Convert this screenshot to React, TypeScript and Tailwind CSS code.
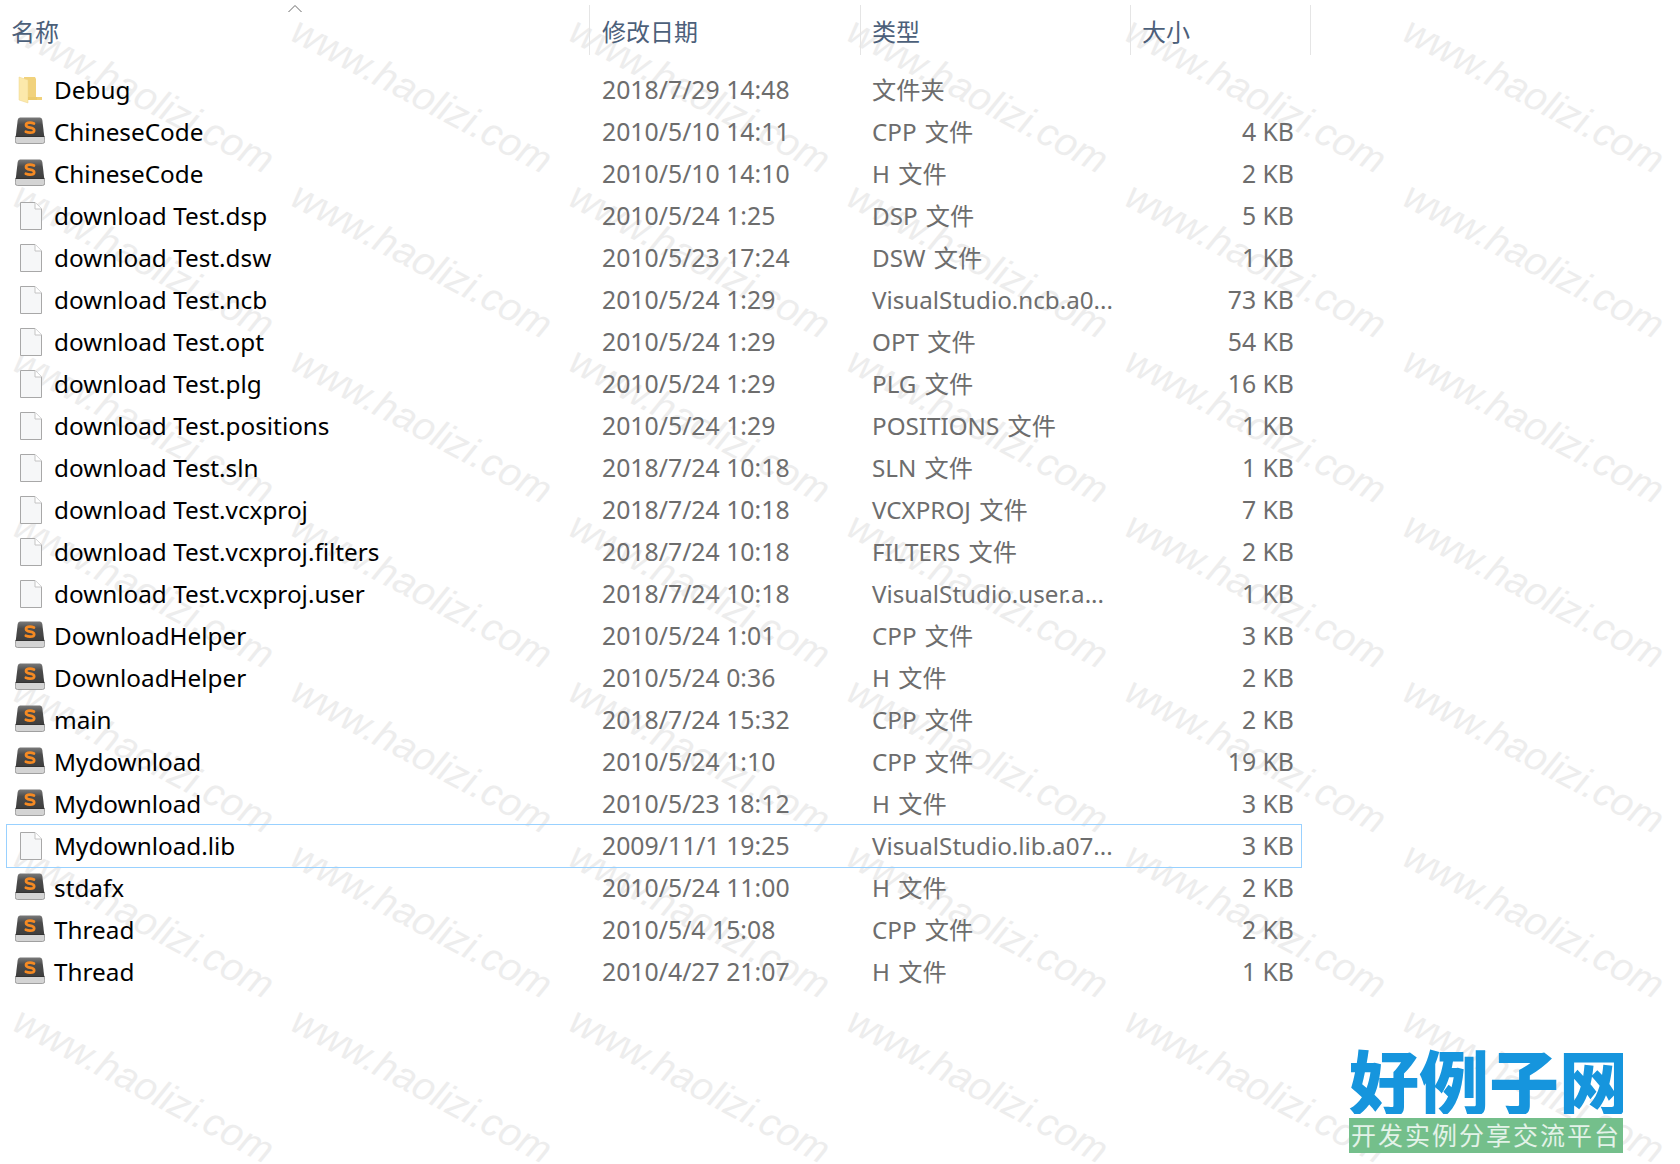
const ROWS: [string, string, string, string, string][] = [
  ["folder", "Debug", "2018/7/29 14:48", "文件夹", ""],
  ["s", "ChineseCode", "2010/5/10 14:11", "CPP 文件", "4 KB"],
  ["s", "ChineseCode", "2010/5/10 14:10", "H 文件", "2 KB"],
  ["f", "download Test.dsp", "2010/5/24 1:25", "DSP 文件", "5 KB"],
  ["f", "download Test.dsw", "2010/5/23 17:24", "DSW 文件", "1 KB"],
  ["f", "download Test.ncb", "2010/5/24 1:29", "VisualStudio.ncb.a0...", "73 KB"],
  ["f", "download Test.opt", "2010/5/24 1:29", "OPT 文件", "54 KB"],
  ["f", "download Test.plg", "2010/5/24 1:29", "PLG 文件", "16 KB"],
  ["f", "download Test.positions", "2010/5/24 1:29", "POSITIONS 文件", "1 KB"],
  ["f", "download Test.sln", "2018/7/24 10:18", "SLN 文件", "1 KB"],
  ["f", "download Test.vcxproj", "2018/7/24 10:18", "VCXPROJ 文件", "7 KB"],
  ["f", "download Test.vcxproj.filters", "2018/7/24 10:18", "FILTERS 文件", "2 KB"],
  ["f", "download Test.vcxproj.user", "2018/7/24 10:18", "VisualStudio.user.a...", "1 KB"],
  ["s", "DownloadHelper", "2010/5/24 1:01", "CPP 文件", "3 KB"],
  ["s", "DownloadHelper", "2010/5/24 0:36", "H 文件", "2 KB"],
  ["s", "main", "2018/7/24 15:32", "CPP 文件", "2 KB"],
  ["s", "Mydownload", "2010/5/24 1:10", "CPP 文件", "19 KB"],
  ["s", "Mydownload", "2010/5/23 18:12", "H 文件", "3 KB"],
  ["f", "Mydownload.lib", "2009/11/1 19:25", "VisualStudio.lib.a07...", "3 KB"],
  ["s", "stdafx", "2010/5/24 11:00", "H 文件", "2 KB"],
  ["s", "Thread", "2010/5/4 15:08", "CPP 文件", "2 KB"],
  ["s", "Thread", "2010/4/27 21:07", "H 文件", "1 KB"],
];

function FolderIcon() {
  return (
    <svg className="-mt-[1px]" width="30" height="30" viewBox="0 0 30 30">
      <path d="M9 2 L20 2 L21 4 L21 22 L27 22 L27 25 L9 25 Z" fill="#f1d27c" />
      <path d="M4 2 L13 5 L13 28 L4 25 Z" fill="#fce9ab" stroke="#efd48c" strokeWidth="0.5" />
      <path d="M13 22 L22 22 L22 25 L13 25 Z" fill="#eccb6d" />
    </svg>
  );
}

function SublimeIcon() {
  return (
    <svg className="-mt-[4px]" width="30" height="27" viewBox="0 0 30 27">
      <defs>
        <linearGradient id="sublimeBody" x1="0" y1="0" x2="0" y2="1">
          <stop offset="0" stopColor="#7a7a7a" />
          <stop offset="0.35" stopColor="#4d4d4d" />
          <stop offset="1" stopColor="#3d3d3d" />
        </linearGradient>
      </defs>
      <path d="M5 0.5 H25 Q27 0.5 27.3 3 L29.3 20 H0.7 L2.7 3 Q3 0.5 5 0.5 Z" fill="url(#sublimeBody)" />
      <path d="M0.7 19.5 H29.3 L29.8 24 Q29.8 26.5 27.5 26.5 H2.5 Q0.2 26.5 0.2 24 Z" fill="#d4d4d4" stroke="#8d8d8d" strokeWidth="0.8" />
      <path d="M0.7 19.5 H29.3" stroke="#333333" strokeWidth="1" />
      <path d="M19 6.5 Q17 5.6 15 5.6 Q11 5.6 11 8 Q11 10 15 10.6 Q19.2 11.2 19.2 13.4 Q19.2 15.6 15 15.6 Q12.8 15.6 10.8 14.7" fill="none" stroke="#f58a23" strokeWidth="2.7" strokeLinecap="round" />
    </svg>
  );
}

function FileIcon() {
  return (
    <svg className="-mt-[1px]" width="30" height="30" viewBox="0 0 30 30">
      <path d="M4.5 1.5 H19 L25.5 8 V28.5 H4.5 Z" fill="#f6f7f8" stroke="#a8a8a8" strokeWidth="1" />
      <path d="M19 1.5 V8 H25.5" fill="#ffffff" stroke="#c4c4c4" strokeWidth="1" />
    </svg>
  );
}

function Row({ r }: { r: [string, string, string, string, string] }) {
  const selected = r[1] === "Mydownload.lib";
  return (
    <div className={`flex items-center w-[1296px] ml-[6px] border ${selected ? "h-[44px] -my-[1px] border-[#99d1ff]" : "h-[42px] border-transparent"}`}>
      <div className="w-[47px] pl-[8px] flex shrink-0">
        {r[0] === "folder" ? <FolderIcon /> : r[0] === "s" ? <SublimeIcon /> : <span className="pl-[1px]"><FileIcon /></span>}
      </div>
      <div className="w-[548px] shrink-0 text-black text-[24.3px] whitespace-nowrap">{r[1]}</div>
      <div className="w-[270px] shrink-0 text-[#6d6d6d] text-[24.8px] whitespace-nowrap">{r[2]}</div>
      <div className="w-[300px] shrink-0 text-[#6d6d6d] text-[24.2px] whitespace-nowrap [word-spacing:2px]">{r[3]}</div>
      <div className="w-[122px] shrink-0 text-right text-[#6d6d6d] text-[24.8px] whitespace-nowrap">{r[4]}</div>
    </div>
  );
}

function Watermarks() {
  const items = [];
  for (let y = 0; y < 7; y++) {
    for (let x = 0; x < 6; x++) {
      items.push(
        <span
          key={`${x}-${y}`}
          className="absolute text-[39px] leading-none text-[#ededed] whitespace-nowrap rotate-[28deg] origin-top-left italic font-['Liberation_Sans',sans-serif]"
          style={{ left: 26 + x * 278, top: 10 + y * 165 }}
        >
          www.haolizi.com
        </span>
      );
    }
  }
  return <div className="absolute inset-0 overflow-hidden pointer-events-none">{items}</div>;
}

export default function App() {
  return (
    <div className="relative w-[1680px] h-[1164px] bg-white overflow-hidden font-['Noto_Sans','Noto_Sans_CJK_SC',sans-serif]">
      <Watermarks />
      <div className="relative">
        <div className="relative flex h-[54px] pt-[5px] text-[#4c607a] text-[24px] leading-[32px]">
          <div className="w-[589px] pl-[11px] pt-[11px] h-[50px]">名称</div>
          <div className="w-[271px] pl-[12px] pt-[11px] border-l border-[#e5e5e5] h-[50px]">修改日期</div>
          <div className="w-[270px] pl-[11px] pt-[11px] border-l border-[#e5e5e5] h-[50px]">类型</div>
          <div className="w-[181px] pl-[11px] pt-[11px] border-x border-[#e5e5e5] h-[50px]">大小</div>
          <svg className="absolute left-[287px] top-[4px]" width="16" height="9" viewBox="0 0 16 9">
            <path d="M1.5 8 L8 1.5 L14.5 8" fill="none" stroke="#6a6a6a" strokeWidth="1" />
          </svg>
        </div>
        <div className="mt-[15px]">
          {ROWS.map((r, i) => <Row key={i} r={r} />)}
        </div>
      </div>
      <div className="absolute left-[1349px] top-[1046px] w-[274px]">
        <div className="h-[68px] w-[274px] overflow-hidden text-[#1695dd] text-[70px] leading-[68px] font-black whitespace-nowrap font-['Noto_Sans_CJK_SC',sans-serif]">好例子网</div>
        <div className="mt-[4px] h-[35px] bg-[#74bf8b] text-[#e3f2e8] text-[25px] leading-[35px] text-center whitespace-nowrap tracking-[2px] overflow-hidden">开发实例分享交流平台</div>
      </div>
    </div>
  );
}
